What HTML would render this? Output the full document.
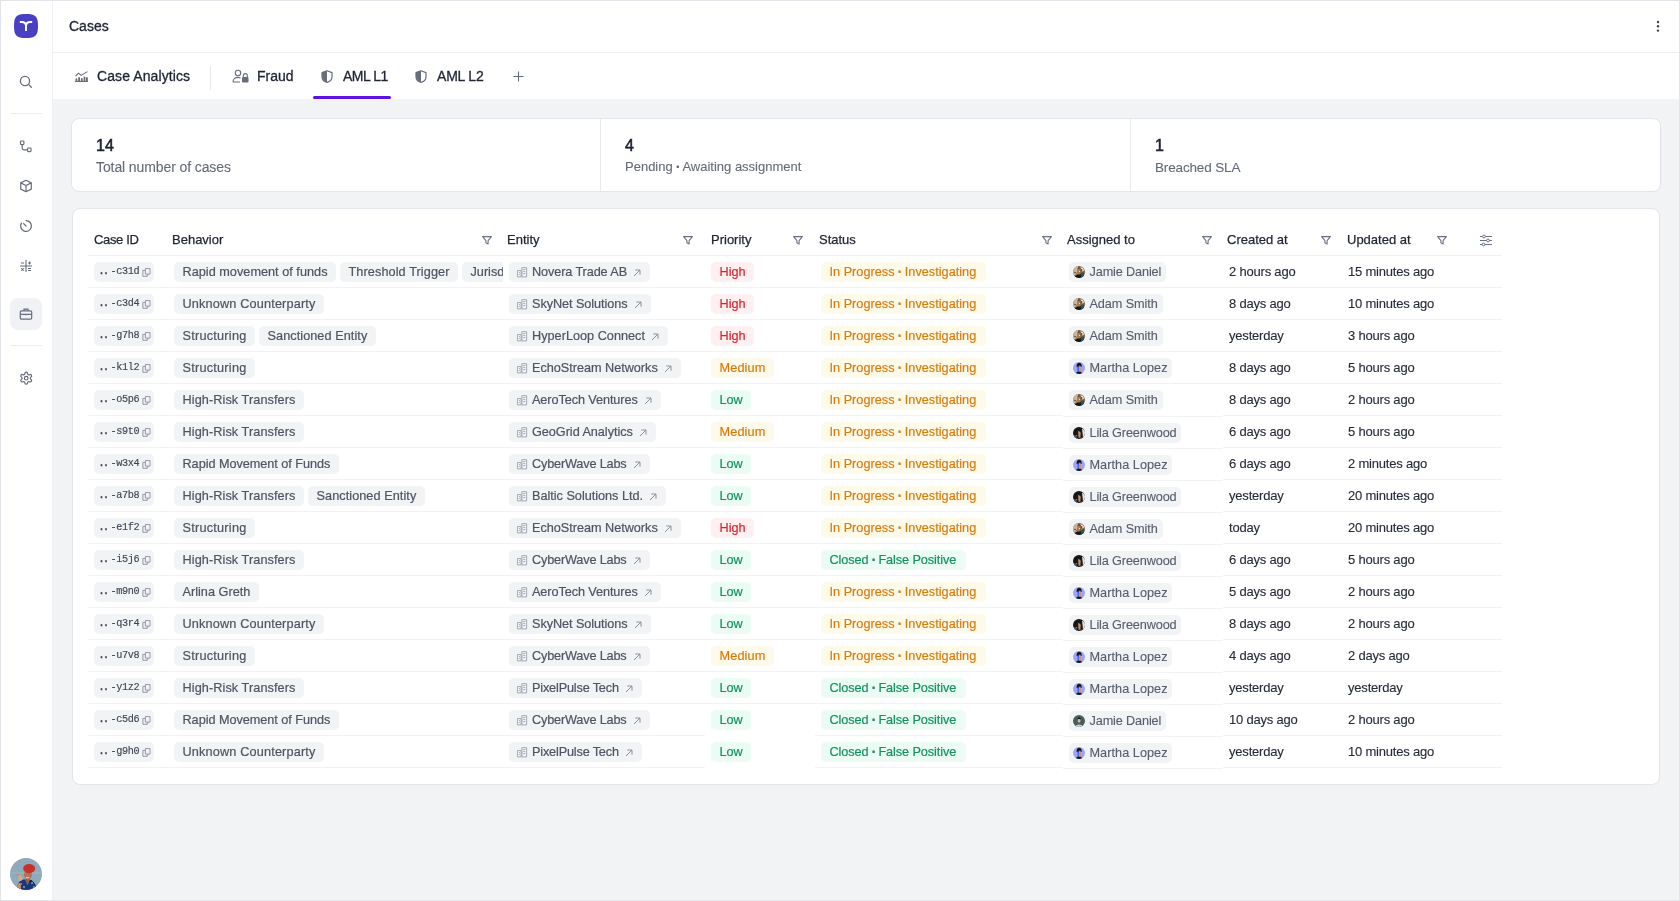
<!DOCTYPE html><html><head><meta charset="utf-8"><style>
*{box-sizing:border-box;margin:0;padding:0}
html,body{width:1680px;height:901px;overflow:hidden;background:#fff}
body{font-family:"Liberation Sans",sans-serif;color:#1f2433;position:relative}
.abs{position:absolute}
.row,.ttl,.th,.stats,.statn{will-change:transform}
#frame{position:absolute;left:0;top:0;width:1680px;height:901px;border:1px solid #e3e4e9;pointer-events:none;z-index:50}
#side{position:absolute;left:0;top:0;width:53px;height:901px;background:#fff;border-right:1px solid #eef0f3}
#main{position:absolute;left:53px;top:0;width:1627px;height:901px;background:#f2f3f5}
#hdr{position:absolute;left:53px;top:0;width:1627px;height:53px;background:#fff;border-bottom:1px solid #eef0f3}
#tabs{position:absolute;left:53px;top:53px;width:1627px;height:46px;background:#fff}
.ttl{position:absolute;font-size:14px;white-space:nowrap;color:#1f2433;-webkit-text-stroke:0.3px #1f2433}
.ic{position:absolute}
.card{position:absolute;background:#fff;border:1px solid #e4e5ea;border-radius:8px}
.statn{position:absolute;font-size:16px;font-weight:normal;color:#1c2130;-webkit-text-stroke:0.55px #1c2130}
.stats{position:absolute;font-size:14px;color:#646a7a;white-space:nowrap;-webkit-text-stroke:0.1px #646a7a}
.th{position:absolute;top:232px;font-size:13px;color:#1f2433;white-space:nowrap;-webkit-text-stroke:0.25px #1f2433}
.row{position:absolute;left:88px;width:1414px;height:32px;border-bottom:1px solid #f1f2f4}
.chip{position:absolute;top:6px;height:20px;border-radius:5px;background:#f2f3f5;font-size:12.7px;line-height:20px;white-space:nowrap;color:#4d5464;padding:0 8.5px;-webkit-text-stroke:0.2px currentColor}
.id{font-family:"Liberation Mono",monospace;font-size:10.5px;letter-spacing:-0.7px;-webkit-text-stroke:0.15px #3f4556;color:#3f4556;padding:0 0 0 5px;width:60px}
.dd{position:absolute;left:4.6px;top:0;letter-spacing:-1.7px;font-size:10px;-webkit-text-stroke:0.5px #3f4556}
.ih{position:absolute;left:16.6px;top:0;letter-spacing:-0.38px;font-size:10.2px}
.cp{position:absolute;left:48px;top:5.5px}
.bld{position:absolute;left:8px;top:5px}
.arr{position:absolute;top:7px}
.av{position:absolute;left:4px;top:4px}
.beh{position:absolute;left:86px;top:0;width:329px;height:32px;overflow:hidden;white-space:nowrap}
.bu{font-weight:normal;font-size:9px;vertical-align:1px}
.pri-h{background:#fef0f0;color:#d9272e}
.pri-m{background:#fefae9;color:#d97a0c}
.pri-l{background:#ebfcf4;color:#149163}
.st-ip{background:#fefae9;color:#da7d0e}
.st-cl{background:#ebfcf4;color:#149163}
.dt{position:absolute;top:0;line-height:32px;font-size:13px;color:#262b3a;white-space:nowrap;letter-spacing:-0.2px;-webkit-text-stroke:0.12px #262b3a}
</style></head><body>
<div id="side"></div><div id="main"></div><div id="hdr"></div><div id="tabs"></div>
<svg class="ic" style="left:14px;top:14px" width="24" height="24" viewBox="0 0 24 24"><path d="M12 0C21.6 0 24 2.4 24 12S21.6 24 12 24 0 21.6 0 12 2.4 0 12 0z" fill="#4a40c3"/><path d="M5.8 7.9H7.6C10.4 7.9 12 9.1 12 11.9M18.2 7.9H16.4C13.6 7.9 12 9.1 12 11.9M12 11V16.9" fill="none" stroke="#fff" stroke-width="2"/></svg>
<svg class="ic" style="left:19px;top:75px" width="14" height="14" viewBox="0 0 14 14"><circle cx="6" cy="6" r="4.6" fill="none" stroke="#676d7c" stroke-width="1.3"/><path d="M9.4 9.4l3.4 3.4" stroke="#676d7c" stroke-width="1.3"/></svg>
<div class="abs" style="left:10px;top:113px;width:32px;height:1px;background:#eceef1"></div>
<svg class="ic" style="left:19px;top:140px" width="14" height="13" viewBox="0 0 14 13"><rect x="1.5" y="1" width="3.4" height="3.6" rx="0.8" fill="none" stroke="#676d7c" stroke-width="1.2"/><rect x="8.6" y="8" width="3.4" height="3.6" rx="0.8" fill="none" stroke="#676d7c" stroke-width="1.2"/><path d="M3.2 4.6v3.4c0 1.2 0.6 1.8 1.8 1.8h3.6" fill="none" stroke="#676d7c" stroke-width="1.2"/></svg>
<svg class="ic" style="left:19px;top:179px" width="14" height="14" viewBox="0 0 14 14"><path d="M7 1.3l5.3 2.6v6.2L7 12.7 1.7 10.1V3.9z M1.7 3.9L7 6.5l5.3-2.6 M7 6.5v6.2" fill="none" stroke="#676d7c" stroke-width="1.2" stroke-linejoin="round"/></svg>
<svg class="ic" style="left:19px;top:219px" width="14" height="14" viewBox="0 0 14 14"><path d="M7 1.6A5.4 5.4 0 1 1 2.4 4.2" fill="none" stroke="#676d7c" stroke-width="1.3" stroke-linecap="round"/><path d="M7 7L4.6 4.6" stroke="#676d7c" stroke-width="1.3" stroke-linecap="round"/></svg>
<svg class="ic" style="left:19px;top:259px" width="14" height="14" viewBox="0 0 14 14"><path d="M7 1v12M1 7h12M2 4h3M9 4h3M10.5 2.5v3M2.3 9.3l2.4 2.4M4.7 9.3l-2.4 2.4M9 9.5h3M9 11.5h3" fill="none" stroke="#676d7c" stroke-width="1.1"/></svg>
<div class="abs" style="left:10px;top:298px;width:32px;height:32px;border-radius:8px;background:#f1f2f5"></div>
<svg class="ic" style="left:19px;top:307px" width="14" height="14" viewBox="0 0 14 14"><rect x="1.3" y="3.8" width="11.4" height="8.4" rx="1.2" fill="none" stroke="#676d7c" stroke-width="1.2"/><path d="M5 3.8V2.2h4v1.6M1.3 7.4h11.4M7 6.8v1.4" fill="none" stroke="#676d7c" stroke-width="1.2"/></svg>
<div class="abs" style="left:10px;top:345px;width:32px;height:1px;background:#eceef1"></div>
<svg class="ic" style="left:18.8px;top:371px" width="14.4" height="14.4" viewBox="0 0 24 24"><path d="M12.22 2h-.44a2 2 0 0 0-2 2v.18a2 2 0 0 1-1 1.73l-.43.25a2 2 0 0 1-2 0l-.15-.08a2 2 0 0 0-2.73.73l-.22.38a2 2 0 0 0 .73 2.730l.15.1a2 2 0 0 1 1 1.72v.51a2 2 0 0 1-1 1.74l-.15.09a2 2 0 0 0-.73 2.73l.22.38a2 2 0 0 0 2.73.73l.15-.08a2 2 0 0 1 2 0l.43.25a2 2 0 0 1 1 1.73V20a2 2 0 0 0 2 2h.44a2 2 0 0 0 2-2v-.18a2 2 0 0 1 1-1.73l.43-.25a2 2 0 0 1 2 0l.15.08a2 2 0 0 0 2.73-.73l.22-.39a2 2 0 0 0-.73-2.73l-.15-.08a2 2 0 0 1-1-1.740v-.5a2 2 0 0 1 1-1.74l.15-.09a2 2 0 0 0 .73-2.73l-.22-.38a2 2 0 0 0-2.73-.73l-.15.08a2 2 0 0 1-2 0l-.43-.25a2 2 0 0 1-1-1.73V4a2 2 0 0 0-2-2z" fill="none" stroke="#676d7c" stroke-width="2" stroke-linejoin="round"/><circle cx="12" cy="12" r="3" fill="none" stroke="#676d7c" stroke-width="2"/></svg>
<svg class="ic" style="left:10px;top:858px" width="32" height="32" viewBox="0 0 32 32"><defs><clipPath id="ac"><circle cx="16" cy="16" r="16"/></clipPath></defs><g clip-path="url(#ac)"><rect width="32" height="32" fill="#8eaabb"/><rect y="14.5" width="32" height="1" fill="#9fb7c6"/><path d="M6 33c0.5-6 3-10.5 7.5-11.5h6c4.5 1 7 5.5 7.5 11.5z" fill="#17397a"/><path d="M15 21.5l2.5 6 2.5-6z" fill="#9a5e44"/><circle cx="11" cy="26" r="0.8" fill="#dfe7f2"/><circle cx="14" cy="29" r="0.8" fill="#dfe7f2"/><circle cx="22" cy="25" r="0.8" fill="#dfe7f2"/><circle cx="24" cy="29" r="0.8" fill="#dfe7f2"/><ellipse cx="18" cy="16.8" rx="4" ry="4.6" fill="#b27458"/><path d="M16 19.2c1 0.8 2.4 0.8 3.2 0" stroke="#f3e6e0" stroke-width="1" fill="none"/><ellipse cx="19.2" cy="10.6" rx="6" ry="4.6" fill="#c9302a"/><path d="M6.5 16.8l7 0.8" stroke="#d9835a" stroke-width="0.9"/><ellipse cx="10.3" cy="20" rx="2" ry="3" fill="#d7a88e"/><circle cx="21" cy="23.3" r="1.1" fill="#1a1a2a"/><ellipse cx="9" cy="29" rx="2" ry="4" fill="#c58a70"/></g></svg>
<div class="ttl" style="left:69px;top:18px;font-size:14px;">Cases</div>
<svg class="ic" style="left:1656px;top:20px" width="4" height="13" viewBox="0 0 4 13"><circle cx="2" cy="2" r="1.2" fill="#3c4150"/><circle cx="2" cy="6.3" r="1.2" fill="#3c4150"/><circle cx="2" cy="10.6" r="1.2" fill="#3c4150"/></svg>
<svg class="ic" style="left:75px;top:71px" width="13" height="11" viewBox="0 0 13 11"><path d="M0.6 5.2l3-3 2.6 2.2L12.4 0.6" fill="none" stroke="#666c7b" stroke-width="1.1" stroke-linejoin="round"/><path d="M0.5 11V8.2a0.9 0.9 0 0 1 1.8 0V11z M3.2 11V7a0.9 0.9 0 0 1 1.8 0V11z M5.9 11V8a0.9 0.9 0 0 1 1.8 0V11z M8.6 11V6.4a0.9 0.9 0 0 1 1.8 0V11z M11 11V6.8a0.9 0.9 0 0 1 1.8 0V11z" fill="#666c7b"/><path d="M0.3 10.4h12.4" stroke="#666c7b" stroke-width="1.1"/></svg>
<div class="ttl" style="left:97px;top:68px;letter-spacing:0.1px">Case Analytics</div>
<div class="abs" style="left:210px;top:66px;width:1px;height:24px;background:#e6e8ec"></div>
<svg class="ic" style="left:232px;top:69px" width="18" height="14" viewBox="0 0 18 14"><circle cx="6" cy="4" r="2.7" fill="none" stroke="#666c7b" stroke-width="1.1"/><path d="M1 13c0-3 2-4.6 5-4.6 1 0 1.8 0.2 2.5 0.5M1 13h7" fill="none" stroke="#666c7b" stroke-width="1.1"/><rect x="10" y="8" width="6.5" height="5.5" rx="1" fill="#666c7b"/><path d="M11.3 8V6.6a2 2 0 0 1 4 0V8" fill="none" stroke="#666c7b" stroke-width="1.1"/></svg>
<div class="ttl" style="left:257px;top:68px">Fraud</div>
<svg class="ic" style="left:321px;top:70px" width="12" height="13" viewBox="0 0 12 13"><path d="M6 0.8L11 2.6v3.8c0 3-2.2 5.2-5 6-2.8-0.8-5-3-5-6V2.6z" fill="none" stroke="#666c7b" stroke-width="1.2" stroke-linejoin="round"/><path d="M6 0.8v11.4c-2.8-0.8-5-3-5-6V2.6z" fill="#666c7b"/></svg>
<div class="ttl" style="left:343px;top:68px;letter-spacing:-0.5px">AML L1</div>
<div class="abs" style="left:313px;top:96px;width:78px;height:3px;border-radius:2px;background:#5b12e3"></div>
<svg class="ic" style="left:415px;top:70px" width="12" height="13" viewBox="0 0 12 13"><path d="M6 0.8L11 2.6v3.8c0 3-2.2 5.2-5 6-2.8-0.8-5-3-5-6V2.6z" fill="none" stroke="#666c7b" stroke-width="1.2" stroke-linejoin="round"/><path d="M6 0.8v11.4c-2.8-0.8-5-3-5-6V2.6z" fill="#666c7b"/></svg>
<div class="ttl" style="left:437px;top:68px;letter-spacing:-0.2px">AML L2</div>
<svg class="ic" style="left:513px;top:71px" width="11" height="11" viewBox="0 0 11 11"><path d="M5.5 0.5v10M0.5 5.5h10" stroke="#666c7b" stroke-width="1.1"/></svg>
<div class="card" style="left:71px;top:118px;width:1590px;height:74px"></div>
<div class="abs" style="left:600px;top:119px;width:1px;height:72px;background:#e9eaee"></div>
<div class="abs" style="left:1130px;top:119px;width:1px;height:72px;background:#e9eaee"></div>
<div class="statn" style="left:96px;top:137px">14</div>
<div class="stats" style="left:96px;top:159px;font-size:14px;letter-spacing:-0.1px">Total number of cases</div>
<div class="statn" style="left:625px;top:137px">4</div>
<div class="stats" style="left:625px;top:159px;font-size:13px;letter-spacing:0px">Pending <b class=bu>•</b> Awaiting assignment</div>
<div class="statn" style="left:1155px;top:137px">1</div>
<div class="stats" style="left:1155px;top:159.5px;font-size:13.5px;letter-spacing:-0.15px">Breached SLA</div>
<div class="card" style="left:72px;top:208px;width:1588px;height:577px"></div>
<div class="th" style="left:94px;letter-spacing:-0.35px">Case ID</div>
<div class="th" style="left:172px;">Behavior</div>
<svg class="ic" style="left:480.5px;top:234px" width="12" height="12" viewBox="0 0 12 12"><path d="M1.6 2.6h8.8L7.1 6.6v3.3L4.9 8.7V6.6z" fill="none" stroke="#6b7180" stroke-width="1.1" stroke-linejoin="round"/></svg>
<div class="th" style="left:507px;">Entity</div>
<svg class="ic" style="left:681.5px;top:234px" width="12" height="12" viewBox="0 0 12 12"><path d="M1.6 2.6h8.8L7.1 6.6v3.3L4.9 8.7V6.6z" fill="none" stroke="#6b7180" stroke-width="1.1" stroke-linejoin="round"/></svg>
<div class="th" style="left:711px;">Priority</div>
<svg class="ic" style="left:791.5px;top:234px" width="12" height="12" viewBox="0 0 12 12"><path d="M1.6 2.6h8.8L7.1 6.6v3.3L4.9 8.7V6.6z" fill="none" stroke="#6b7180" stroke-width="1.1" stroke-linejoin="round"/></svg>
<div class="th" style="left:819px;">Status</div>
<svg class="ic" style="left:1040.5px;top:234px" width="12" height="12" viewBox="0 0 12 12"><path d="M1.6 2.6h8.8L7.1 6.6v3.3L4.9 8.7V6.6z" fill="none" stroke="#6b7180" stroke-width="1.1" stroke-linejoin="round"/></svg>
<div class="th" style="left:1067px;">Assigned to</div>
<svg class="ic" style="left:1200.5px;top:234px" width="12" height="12" viewBox="0 0 12 12"><path d="M1.6 2.6h8.8L7.1 6.6v3.3L4.9 8.7V6.6z" fill="none" stroke="#6b7180" stroke-width="1.1" stroke-linejoin="round"/></svg>
<div class="th" style="left:1227px;">Created at</div>
<svg class="ic" style="left:1319.5px;top:234px" width="12" height="12" viewBox="0 0 12 12"><path d="M1.6 2.6h8.8L7.1 6.6v3.3L4.9 8.7V6.6z" fill="none" stroke="#6b7180" stroke-width="1.1" stroke-linejoin="round"/></svg>
<div class="th" style="left:1347px;">Updated at</div>
<svg class="ic" style="left:1435.5px;top:234px" width="12" height="12" viewBox="0 0 12 12"><path d="M1.6 2.6h8.8L7.1 6.6v3.3L4.9 8.7V6.6z" fill="none" stroke="#6b7180" stroke-width="1.1" stroke-linejoin="round"/></svg>
<svg class="ic" style="left:1479px;top:234px" width="14" height="13" viewBox="0 0 14 13"><path d="M1 2.5h12M1 6.5h12M1 10.5h12" stroke="#6b7180" stroke-width="1.1"/><circle cx="5" cy="2.5" r="1.4" fill="#fff" stroke="#6b7180" stroke-width="1"/><circle cx="9" cy="6.5" r="1.4" fill="#fff" stroke="#6b7180" stroke-width="1"/><circle cx="4.5" cy="10.5" r="1.4" fill="#fff" stroke="#6b7180" stroke-width="1"/></svg>
<div class="abs" style="left:88px;top:255px;width:1414px;height:1px;background:#eff0f3"></div>
<div class="row" style="top:256px">
<div class="chip id" style="left:6px"><span class="dd">..</span><span class="ih">-c31d</span><svg class="cp" width="9" height="9" viewBox="0 0 9 9"><path d="M3.4 0.5h4.6v5.6H3.4z" fill="none" stroke="#9298a6" stroke-width="1"/><path d="M3.4 2.4H0.9v5.9h4.5V6.1" fill="none" stroke="#9298a6" stroke-width="1"/></svg></div>
<div class="beh"><div class="chip" style="position:relative;display:inline-block;margin-right:4px;vertical-align:top;width:162px;letter-spacing:0.018px;">Rapid movement of funds</div><div class="chip" style="position:relative;display:inline-block;margin-right:4px;vertical-align:top;width:118px;letter-spacing:0.092px;">Threshold Trigger</div><div class="chip" style="position:relative;display:inline-block;margin-right:4px;vertical-align:top;">Jurisdiction Risk</div></div>
<div class="chip" style="left:421px;padding-left:23px;padding-right:22px;width:141px;letter-spacing:-0.108px;"><svg class="bld" width="11" height="11" viewBox="0 0 11 11"><path d="M0.6 3.5h3.5v6.4H0.6z M4.9 0.7h4.7v9.2H4.9z M6.3 2.6h1.9 M6.3 4.6h1.9 M6.3 6.6h1.9" fill="none" stroke="#9ea3b0" stroke-width="0.95"/><circle cx="2.35" cy="5.6" r="0.55" fill="#9ea3b0"/><circle cx="2.35" cy="7.3" r="0.55" fill="#9ea3b0"/></svg>Novera Trade AB<svg class="arr" style="right:9px" width="8" height="8" viewBox="0 0 8 8"><path d="M1 7L7 1M2.3 1H7v4.7" fill="none" stroke="#8a909d" stroke-width="1"/></svg></div>
<div class="chip pri-h" style="left:623px;width:43px;letter-spacing:-0.023px;">High</div>
<div class="chip st-ip" style="left:733px;width:165px;letter-spacing:0.014px;">In Progress <b class=bu>•</b> Investigating</div>
<div class="chip" style="left:981px;top:6px;padding-left:20.5px;padding-right:5px;width:97px;letter-spacing:-0.137px;color:#575d6d;-webkit-text-stroke:0.12px #575d6d"><svg class="av" width="12" height="12" viewBox="0 0 12 12"><defs><clipPath id="c_jd"><circle cx="6" cy="6" r="6"/></clipPath></defs><g clip-path="url(#c_jd)"><rect width="12" height="12" fill="#7b6552"/><path d="M0 0h5v4.5L2.5 9 0 9z" fill="#c9b79a"/><path d="M7.5 1.2c2 0 3.6 1.5 3.6 3.5L9 5.5z" fill="#e8ddc8"/><circle cx="8.6" cy="4" r="0.8" fill="#12322e"/><path d="M4 3c1.6-0.8 3.2 0 3.3 1.8l-0.3 3.4H4.5z" fill="#b27952"/><path d="M4.5 2.5c0.6-0.6 1.6-0.8 2.4-0.3" stroke="#5a2430" stroke-width="0.8" fill="none"/><circle cx="6.6" cy="5.6" r="0.5" fill="#fff"/><path d="M1.5 12c0.5-2.5 2.2-3.5 4.5-3.5L9 8c1.5 0.4 2.3 1.8 2.5 4z" fill="#141a1a"/><path d="M7.5 7.5l3-1.5 1 2v4h-3z" fill="#2c5550"/><circle cx="2" cy="6.5" r="0.7" fill="#12322e"/><circle cx="3.2" cy="8.4" r="0.5" fill="#c89630"/></g></svg>Jamie Daniel</div>
<div class="dt" style="left:1141px">2 hours ago</div>
<div class="dt" style="left:1260px">15 minutes ago</div>
</div>
<div class="row" style="top:288px">
<div class="chip id" style="left:6px"><span class="dd">..</span><span class="ih">-c3d4</span><svg class="cp" width="9" height="9" viewBox="0 0 9 9"><path d="M3.4 0.5h4.6v5.6H3.4z" fill="none" stroke="#9298a6" stroke-width="1"/><path d="M3.4 2.4H0.9v5.9h4.5V6.1" fill="none" stroke="#9298a6" stroke-width="1"/></svg></div>
<div class="beh"><div class="chip" style="position:relative;display:inline-block;margin-right:4px;vertical-align:top;width:150px;letter-spacing:0.162px;">Unknown Counterparty</div></div>
<div class="chip" style="left:421px;padding-left:23px;padding-right:22px;width:141.5px;letter-spacing:-0.070px;"><svg class="bld" width="11" height="11" viewBox="0 0 11 11"><path d="M0.6 3.5h3.5v6.4H0.6z M4.9 0.7h4.7v9.2H4.9z M6.3 2.6h1.9 M6.3 4.6h1.9 M6.3 6.6h1.9" fill="none" stroke="#9ea3b0" stroke-width="0.95"/><circle cx="2.35" cy="5.6" r="0.55" fill="#9ea3b0"/><circle cx="2.35" cy="7.3" r="0.55" fill="#9ea3b0"/></svg>SkyNet Solutions<svg class="arr" style="right:9px" width="8" height="8" viewBox="0 0 8 8"><path d="M1 7L7 1M2.3 1H7v4.7" fill="none" stroke="#8a909d" stroke-width="1"/></svg></div>
<div class="chip pri-h" style="left:623px;width:43px;letter-spacing:-0.023px;">High</div>
<div class="chip st-ip" style="left:733px;width:165px;letter-spacing:0.014px;">In Progress <b class=bu>•</b> Investigating</div>
<div class="chip" style="left:981px;top:6px;padding-left:20.5px;padding-right:5px;width:93.5px;letter-spacing:-0.091px;color:#575d6d;-webkit-text-stroke:0.12px #575d6d"><svg class="av" width="12" height="12" viewBox="0 0 12 12"><defs><clipPath id="c_as"><circle cx="6" cy="6" r="6"/></clipPath></defs><g clip-path="url(#c_as)"><rect width="12" height="12" fill="#7b6552"/><path d="M0 0h5v4.5L2.5 9 0 9z" fill="#c9b79a"/><path d="M7.5 1.2c2 0 3.6 1.5 3.6 3.5L9 5.5z" fill="#e8ddc8"/><circle cx="8.6" cy="4" r="0.8" fill="#12322e"/><path d="M4 3c1.6-0.8 3.2 0 3.3 1.8l-0.3 3.4H4.5z" fill="#b27952"/><path d="M4.5 2.5c0.6-0.6 1.6-0.8 2.4-0.3" stroke="#5a2430" stroke-width="0.8" fill="none"/><circle cx="6.6" cy="5.6" r="0.5" fill="#fff"/><path d="M1.5 12c0.5-2.5 2.2-3.5 4.5-3.5L9 8c1.5 0.4 2.3 1.8 2.5 4z" fill="#141a1a"/><path d="M7.5 7.5l3-1.5 1 2v4h-3z" fill="#2c5550"/><circle cx="2" cy="6.5" r="0.7" fill="#12322e"/><circle cx="3.2" cy="8.4" r="0.5" fill="#c89630"/></g></svg>Adam Smith</div>
<div class="dt" style="left:1141px">8 days ago</div>
<div class="dt" style="left:1260px">10 minutes ago</div>
</div>
<div class="row" style="top:320px">
<div class="chip id" style="left:6px"><span class="dd">..</span><span class="ih">-g7h8</span><svg class="cp" width="9" height="9" viewBox="0 0 9 9"><path d="M3.4 0.5h4.6v5.6H3.4z" fill="none" stroke="#9298a6" stroke-width="1"/><path d="M3.4 2.4H0.9v5.9h4.5V6.1" fill="none" stroke="#9298a6" stroke-width="1"/></svg></div>
<div class="beh"><div class="chip" style="position:relative;display:inline-block;margin-right:4px;vertical-align:top;width:81px;letter-spacing:0.240px;">Structuring</div><div class="chip" style="position:relative;display:inline-block;margin-right:4px;vertical-align:top;width:116.8px;letter-spacing:0.062px;">Sanctioned Entity</div></div>
<div class="chip" style="left:421px;padding-left:23px;padding-right:22px;width:159px;letter-spacing:0.008px;"><svg class="bld" width="11" height="11" viewBox="0 0 11 11"><path d="M0.6 3.5h3.5v6.4H0.6z M4.9 0.7h4.7v9.2H4.9z M6.3 2.6h1.9 M6.3 4.6h1.9 M6.3 6.6h1.9" fill="none" stroke="#9ea3b0" stroke-width="0.95"/><circle cx="2.35" cy="5.6" r="0.55" fill="#9ea3b0"/><circle cx="2.35" cy="7.3" r="0.55" fill="#9ea3b0"/></svg>HyperLoop Connect<svg class="arr" style="right:9px" width="8" height="8" viewBox="0 0 8 8"><path d="M1 7L7 1M2.3 1H7v4.7" fill="none" stroke="#8a909d" stroke-width="1"/></svg></div>
<div class="chip pri-h" style="left:623px;width:43px;letter-spacing:-0.023px;">High</div>
<div class="chip st-ip" style="left:733px;width:165px;letter-spacing:0.014px;">In Progress <b class=bu>•</b> Investigating</div>
<div class="chip" style="left:981px;top:6px;padding-left:20.5px;padding-right:5px;width:93.5px;letter-spacing:-0.091px;color:#575d6d;-webkit-text-stroke:0.12px #575d6d"><svg class="av" width="12" height="12" viewBox="0 0 12 12"><defs><clipPath id="c_as"><circle cx="6" cy="6" r="6"/></clipPath></defs><g clip-path="url(#c_as)"><rect width="12" height="12" fill="#7b6552"/><path d="M0 0h5v4.5L2.5 9 0 9z" fill="#c9b79a"/><path d="M7.5 1.2c2 0 3.6 1.5 3.6 3.5L9 5.5z" fill="#e8ddc8"/><circle cx="8.6" cy="4" r="0.8" fill="#12322e"/><path d="M4 3c1.6-0.8 3.2 0 3.3 1.8l-0.3 3.4H4.5z" fill="#b27952"/><path d="M4.5 2.5c0.6-0.6 1.6-0.8 2.4-0.3" stroke="#5a2430" stroke-width="0.8" fill="none"/><circle cx="6.6" cy="5.6" r="0.5" fill="#fff"/><path d="M1.5 12c0.5-2.5 2.2-3.5 4.5-3.5L9 8c1.5 0.4 2.3 1.8 2.5 4z" fill="#141a1a"/><path d="M7.5 7.5l3-1.5 1 2v4h-3z" fill="#2c5550"/><circle cx="2" cy="6.5" r="0.7" fill="#12322e"/><circle cx="3.2" cy="8.4" r="0.5" fill="#c89630"/></g></svg>Adam Smith</div>
<div class="dt" style="left:1141px">yesterday</div>
<div class="dt" style="left:1260px">3 hours ago</div>
</div>
<div class="row" style="top:352px">
<div class="chip id" style="left:6px"><span class="dd">..</span><span class="ih">-k1l2</span><svg class="cp" width="9" height="9" viewBox="0 0 9 9"><path d="M3.4 0.5h4.6v5.6H3.4z" fill="none" stroke="#9298a6" stroke-width="1"/><path d="M3.4 2.4H0.9v5.9h4.5V6.1" fill="none" stroke="#9298a6" stroke-width="1"/></svg></div>
<div class="beh"><div class="chip" style="position:relative;display:inline-block;margin-right:4px;vertical-align:top;width:81px;letter-spacing:0.240px;">Structuring</div></div>
<div class="chip" style="left:421px;padding-left:23px;padding-right:22px;width:171.7px;letter-spacing:-0.027px;"><svg class="bld" width="11" height="11" viewBox="0 0 11 11"><path d="M0.6 3.5h3.5v6.4H0.6z M4.9 0.7h4.7v9.2H4.9z M6.3 2.6h1.9 M6.3 4.6h1.9 M6.3 6.6h1.9" fill="none" stroke="#9ea3b0" stroke-width="0.95"/><circle cx="2.35" cy="5.6" r="0.55" fill="#9ea3b0"/><circle cx="2.35" cy="7.3" r="0.55" fill="#9ea3b0"/></svg>EchoStream Networks<svg class="arr" style="right:9px" width="8" height="8" viewBox="0 0 8 8"><path d="M1 7L7 1M2.3 1H7v4.7" fill="none" stroke="#8a909d" stroke-width="1"/></svg></div>
<div class="chip pri-m" style="left:623px;width:63px;letter-spacing:0.146px;">Medium</div>
<div class="chip st-ip" style="left:733px;width:165px;letter-spacing:0.014px;">In Progress <b class=bu>•</b> Investigating</div>
<div class="chip" style="left:981px;top:6px;padding-left:20.5px;padding-right:5px;width:103.4px;letter-spacing:0.042px;color:#575d6d;-webkit-text-stroke:0.12px #575d6d"><svg class="av" width="12" height="12" viewBox="0 0 12 12"><defs><clipPath id="c_ml"><circle cx="6" cy="6" r="6"/></clipPath></defs><g clip-path="url(#c_ml)"><rect width="12" height="12" fill="#9ea6f2"/><path d="M3.6 4.2c0-2.6 1.4-3.4 2.6-3.4 1.4 0 2.4 0.9 2.4 2.8v1.5H3.6z" fill="#15142a"/><path d="M4.2 4.5h1.9v6.5H4.6z" fill="#3d6fe6"/><path d="M6.1 3.5c1.2 0 1.9 0.8 1.9 2.2v5.3H6.1z" fill="#c9947c"/><path d="M2.5 12c0.5-1.6 1.6-2.2 3.5-2.2s3 0.6 3.5 2.2z" fill="#0c1030"/></g></svg>Martha Lopez</div>
<div class="dt" style="left:1141px">8 days ago</div>
<div class="dt" style="left:1260px">5 hours ago</div>
</div>
<div class="row" style="top:384px">
<div class="chip id" style="left:6px"><span class="dd">..</span><span class="ih">-o5p6</span><svg class="cp" width="9" height="9" viewBox="0 0 9 9"><path d="M3.4 0.5h4.6v5.6H3.4z" fill="none" stroke="#9298a6" stroke-width="1"/><path d="M3.4 2.4H0.9v5.9h4.5V6.1" fill="none" stroke="#9298a6" stroke-width="1"/></svg></div>
<div class="beh"><div class="chip" style="position:relative;display:inline-block;margin-right:4px;vertical-align:top;width:130px;letter-spacing:0.084px;">High-Risk Transfers</div></div>
<div class="chip" style="left:421px;padding-left:23px;padding-right:22px;width:151.7px;letter-spacing:-0.089px;"><svg class="bld" width="11" height="11" viewBox="0 0 11 11"><path d="M0.6 3.5h3.5v6.4H0.6z M4.9 0.7h4.7v9.2H4.9z M6.3 2.6h1.9 M6.3 4.6h1.9 M6.3 6.6h1.9" fill="none" stroke="#9ea3b0" stroke-width="0.95"/><circle cx="2.35" cy="5.6" r="0.55" fill="#9ea3b0"/><circle cx="2.35" cy="7.3" r="0.55" fill="#9ea3b0"/></svg>AeroTech Ventures<svg class="arr" style="right:9px" width="8" height="8" viewBox="0 0 8 8"><path d="M1 7L7 1M2.3 1H7v4.7" fill="none" stroke="#8a909d" stroke-width="1"/></svg></div>
<div class="chip pri-l" style="left:623px;width:40px;letter-spacing:-0.094px;">Low</div>
<div class="chip st-ip" style="left:733px;width:165px;letter-spacing:0.014px;">In Progress <b class=bu>•</b> Investigating</div>
<div class="chip" style="left:981px;top:6px;padding-left:20.5px;padding-right:5px;width:93.5px;letter-spacing:-0.091px;color:#575d6d;-webkit-text-stroke:0.12px #575d6d"><svg class="av" width="12" height="12" viewBox="0 0 12 12"><defs><clipPath id="c_as"><circle cx="6" cy="6" r="6"/></clipPath></defs><g clip-path="url(#c_as)"><rect width="12" height="12" fill="#7b6552"/><path d="M0 0h5v4.5L2.5 9 0 9z" fill="#c9b79a"/><path d="M7.5 1.2c2 0 3.6 1.5 3.6 3.5L9 5.5z" fill="#e8ddc8"/><circle cx="8.6" cy="4" r="0.8" fill="#12322e"/><path d="M4 3c1.6-0.8 3.2 0 3.3 1.8l-0.3 3.4H4.5z" fill="#b27952"/><path d="M4.5 2.5c0.6-0.6 1.6-0.8 2.4-0.3" stroke="#5a2430" stroke-width="0.8" fill="none"/><circle cx="6.6" cy="5.6" r="0.5" fill="#fff"/><path d="M1.5 12c0.5-2.5 2.2-3.5 4.5-3.5L9 8c1.5 0.4 2.3 1.8 2.5 4z" fill="#141a1a"/><path d="M7.5 7.5l3-1.5 1 2v4h-3z" fill="#2c5550"/><circle cx="2" cy="6.5" r="0.7" fill="#12322e"/><circle cx="3.2" cy="8.4" r="0.5" fill="#c89630"/></g></svg>Adam Smith</div>
<div class="dt" style="left:1141px">8 days ago</div>
<div class="dt" style="left:1260px">2 hours ago</div>
</div>
<div class="row" style="top:416px">
<div class="chip id" style="left:6px"><span class="dd">..</span><span class="ih">-s9t0</span><svg class="cp" width="9" height="9" viewBox="0 0 9 9"><path d="M3.4 0.5h4.6v5.6H3.4z" fill="none" stroke="#9298a6" stroke-width="1"/><path d="M3.4 2.4H0.9v5.9h4.5V6.1" fill="none" stroke="#9298a6" stroke-width="1"/></svg></div>
<div class="beh"><div class="chip" style="position:relative;display:inline-block;margin-right:4px;vertical-align:top;width:130px;letter-spacing:0.084px;">High-Risk Transfers</div></div>
<div class="chip" style="left:421px;padding-left:23px;padding-right:22px;width:146.8px;letter-spacing:-0.044px;"><svg class="bld" width="11" height="11" viewBox="0 0 11 11"><path d="M0.6 3.5h3.5v6.4H0.6z M4.9 0.7h4.7v9.2H4.9z M6.3 2.6h1.9 M6.3 4.6h1.9 M6.3 6.6h1.9" fill="none" stroke="#9ea3b0" stroke-width="0.95"/><circle cx="2.35" cy="5.6" r="0.55" fill="#9ea3b0"/><circle cx="2.35" cy="7.3" r="0.55" fill="#9ea3b0"/></svg>GeoGrid Analytics<svg class="arr" style="right:9px" width="8" height="8" viewBox="0 0 8 8"><path d="M1 7L7 1M2.3 1H7v4.7" fill="none" stroke="#8a909d" stroke-width="1"/></svg></div>
<div class="chip pri-m" style="left:623px;width:63px;letter-spacing:0.146px;">Medium</div>
<div class="chip st-ip" style="left:733px;width:165px;letter-spacing:0.014px;">In Progress <b class=bu>•</b> Investigating</div>
<div class="chip" style="left:981px;top:7px;padding-left:20.5px;padding-right:5px;width:112.3px;letter-spacing:-0.134px;color:#575d6d;-webkit-text-stroke:0.12px #575d6d"><svg class="av" width="12" height="12" viewBox="0 0 12 12"><defs><clipPath id="c_lg"><circle cx="6" cy="6" r="6"/></clipPath></defs><g clip-path="url(#c_lg)"><rect width="12" height="12" fill="#1c1411"/><path d="M9 1.5l3 2v6l-2 1z" fill="#dbe6ec"/><path d="M5 4.5c1.3-0.6 2.6 0 2.7 1.8l-0.3 4.5H5.6z" fill="#c28e70"/><path d="M1 8.5c1-0.6 2-0.4 2.5 0.3l0.5 3H1z" fill="#2f6a8f"/><circle cx="3.8" cy="8.4" r="0.6" fill="#d8692a"/><path d="M8.5 10c0.8 0 1.4 0.6 1.6 1.6l-1.6 0.4z" fill="#2a6488"/></g></svg>Lila Greenwood</div>
<div class="dt" style="left:1141px">6 days ago</div>
<div class="dt" style="left:1260px">5 hours ago</div>
</div>
<div class="row" style="top:448px">
<div class="chip id" style="left:6px"><span class="dd">..</span><span class="ih">-w3x4</span><svg class="cp" width="9" height="9" viewBox="0 0 9 9"><path d="M3.4 0.5h4.6v5.6H3.4z" fill="none" stroke="#9298a6" stroke-width="1"/><path d="M3.4 2.4H0.9v5.9h4.5V6.1" fill="none" stroke="#9298a6" stroke-width="1"/></svg></div>
<div class="beh"><div class="chip" style="position:relative;display:inline-block;margin-right:4px;vertical-align:top;width:164.8px;letter-spacing:-0.044px;">Rapid Movement of Funds</div></div>
<div class="chip" style="left:421px;padding-left:23px;padding-right:22px;width:140.5px;letter-spacing:-0.167px;"><svg class="bld" width="11" height="11" viewBox="0 0 11 11"><path d="M0.6 3.5h3.5v6.4H0.6z M4.9 0.7h4.7v9.2H4.9z M6.3 2.6h1.9 M6.3 4.6h1.9 M6.3 6.6h1.9" fill="none" stroke="#9ea3b0" stroke-width="0.95"/><circle cx="2.35" cy="5.6" r="0.55" fill="#9ea3b0"/><circle cx="2.35" cy="7.3" r="0.55" fill="#9ea3b0"/></svg>CyberWave Labs<svg class="arr" style="right:9px" width="8" height="8" viewBox="0 0 8 8"><path d="M1 7L7 1M2.3 1H7v4.7" fill="none" stroke="#8a909d" stroke-width="1"/></svg></div>
<div class="chip pri-l" style="left:623px;width:40px;letter-spacing:-0.094px;">Low</div>
<div class="chip st-ip" style="left:733px;width:165px;letter-spacing:0.014px;">In Progress <b class=bu>•</b> Investigating</div>
<div class="chip" style="left:981px;top:7px;padding-left:20.5px;padding-right:5px;width:103.4px;letter-spacing:0.042px;color:#575d6d;-webkit-text-stroke:0.12px #575d6d"><svg class="av" width="12" height="12" viewBox="0 0 12 12"><defs><clipPath id="c_ml"><circle cx="6" cy="6" r="6"/></clipPath></defs><g clip-path="url(#c_ml)"><rect width="12" height="12" fill="#9ea6f2"/><path d="M3.6 4.2c0-2.6 1.4-3.4 2.6-3.4 1.4 0 2.4 0.9 2.4 2.8v1.5H3.6z" fill="#15142a"/><path d="M4.2 4.5h1.9v6.5H4.6z" fill="#3d6fe6"/><path d="M6.1 3.5c1.2 0 1.9 0.8 1.9 2.2v5.3H6.1z" fill="#c9947c"/><path d="M2.5 12c0.5-1.6 1.6-2.2 3.5-2.2s3 0.6 3.5 2.2z" fill="#0c1030"/></g></svg>Martha Lopez</div>
<div class="dt" style="left:1141px">6 days ago</div>
<div class="dt" style="left:1260px">2 minutes ago</div>
</div>
<div class="row" style="top:480px">
<div class="chip id" style="left:6px"><span class="dd">..</span><span class="ih">-a7b8</span><svg class="cp" width="9" height="9" viewBox="0 0 9 9"><path d="M3.4 0.5h4.6v5.6H3.4z" fill="none" stroke="#9298a6" stroke-width="1"/><path d="M3.4 2.4H0.9v5.9h4.5V6.1" fill="none" stroke="#9298a6" stroke-width="1"/></svg></div>
<div class="beh"><div class="chip" style="position:relative;display:inline-block;margin-right:4px;vertical-align:top;width:130px;letter-spacing:0.084px;">High-Risk Transfers</div><div class="chip" style="position:relative;display:inline-block;margin-right:4px;vertical-align:top;width:116.8px;letter-spacing:0.062px;">Sanctioned Entity</div></div>
<div class="chip" style="left:421px;padding-left:23px;padding-right:22px;width:157px;letter-spacing:-0.021px;"><svg class="bld" width="11" height="11" viewBox="0 0 11 11"><path d="M0.6 3.5h3.5v6.4H0.6z M4.9 0.7h4.7v9.2H4.9z M6.3 2.6h1.9 M6.3 4.6h1.9 M6.3 6.6h1.9" fill="none" stroke="#9ea3b0" stroke-width="0.95"/><circle cx="2.35" cy="5.6" r="0.55" fill="#9ea3b0"/><circle cx="2.35" cy="7.3" r="0.55" fill="#9ea3b0"/></svg>Baltic Solutions Ltd.<svg class="arr" style="right:9px" width="8" height="8" viewBox="0 0 8 8"><path d="M1 7L7 1M2.3 1H7v4.7" fill="none" stroke="#8a909d" stroke-width="1"/></svg></div>
<div class="chip pri-l" style="left:623px;width:40px;letter-spacing:-0.094px;">Low</div>
<div class="chip st-ip" style="left:733px;width:165px;letter-spacing:0.014px;">In Progress <b class=bu>•</b> Investigating</div>
<div class="chip" style="left:981px;top:7px;padding-left:20.5px;padding-right:5px;width:112.3px;letter-spacing:-0.134px;color:#575d6d;-webkit-text-stroke:0.12px #575d6d"><svg class="av" width="12" height="12" viewBox="0 0 12 12"><defs><clipPath id="c_lg"><circle cx="6" cy="6" r="6"/></clipPath></defs><g clip-path="url(#c_lg)"><rect width="12" height="12" fill="#1c1411"/><path d="M9 1.5l3 2v6l-2 1z" fill="#dbe6ec"/><path d="M5 4.5c1.3-0.6 2.6 0 2.7 1.8l-0.3 4.5H5.6z" fill="#c28e70"/><path d="M1 8.5c1-0.6 2-0.4 2.5 0.3l0.5 3H1z" fill="#2f6a8f"/><circle cx="3.8" cy="8.4" r="0.6" fill="#d8692a"/><path d="M8.5 10c0.8 0 1.4 0.6 1.6 1.6l-1.6 0.4z" fill="#2a6488"/></g></svg>Lila Greenwood</div>
<div class="dt" style="left:1141px">yesterday</div>
<div class="dt" style="left:1260px">20 minutes ago</div>
</div>
<div class="row" style="top:512px">
<div class="chip id" style="left:6px"><span class="dd">..</span><span class="ih">-e1f2</span><svg class="cp" width="9" height="9" viewBox="0 0 9 9"><path d="M3.4 0.5h4.6v5.6H3.4z" fill="none" stroke="#9298a6" stroke-width="1"/><path d="M3.4 2.4H0.9v5.9h4.5V6.1" fill="none" stroke="#9298a6" stroke-width="1"/></svg></div>
<div class="beh"><div class="chip" style="position:relative;display:inline-block;margin-right:4px;vertical-align:top;width:81px;letter-spacing:0.240px;">Structuring</div></div>
<div class="chip" style="left:421px;padding-left:23px;padding-right:22px;width:171.7px;letter-spacing:-0.027px;"><svg class="bld" width="11" height="11" viewBox="0 0 11 11"><path d="M0.6 3.5h3.5v6.4H0.6z M4.9 0.7h4.7v9.2H4.9z M6.3 2.6h1.9 M6.3 4.6h1.9 M6.3 6.6h1.9" fill="none" stroke="#9ea3b0" stroke-width="0.95"/><circle cx="2.35" cy="5.6" r="0.55" fill="#9ea3b0"/><circle cx="2.35" cy="7.3" r="0.55" fill="#9ea3b0"/></svg>EchoStream Networks<svg class="arr" style="right:9px" width="8" height="8" viewBox="0 0 8 8"><path d="M1 7L7 1M2.3 1H7v4.7" fill="none" stroke="#8a909d" stroke-width="1"/></svg></div>
<div class="chip pri-h" style="left:623px;width:43px;letter-spacing:-0.023px;">High</div>
<div class="chip st-ip" style="left:733px;width:165px;letter-spacing:0.014px;">In Progress <b class=bu>•</b> Investigating</div>
<div class="chip" style="left:981px;top:7px;padding-left:20.5px;padding-right:5px;width:93.5px;letter-spacing:-0.091px;color:#575d6d;-webkit-text-stroke:0.12px #575d6d"><svg class="av" width="12" height="12" viewBox="0 0 12 12"><defs><clipPath id="c_as"><circle cx="6" cy="6" r="6"/></clipPath></defs><g clip-path="url(#c_as)"><rect width="12" height="12" fill="#7b6552"/><path d="M0 0h5v4.5L2.5 9 0 9z" fill="#c9b79a"/><path d="M7.5 1.2c2 0 3.6 1.5 3.6 3.5L9 5.5z" fill="#e8ddc8"/><circle cx="8.6" cy="4" r="0.8" fill="#12322e"/><path d="M4 3c1.6-0.8 3.2 0 3.3 1.8l-0.3 3.4H4.5z" fill="#b27952"/><path d="M4.5 2.5c0.6-0.6 1.6-0.8 2.4-0.3" stroke="#5a2430" stroke-width="0.8" fill="none"/><circle cx="6.6" cy="5.6" r="0.5" fill="#fff"/><path d="M1.5 12c0.5-2.5 2.2-3.5 4.5-3.5L9 8c1.5 0.4 2.3 1.8 2.5 4z" fill="#141a1a"/><path d="M7.5 7.5l3-1.5 1 2v4h-3z" fill="#2c5550"/><circle cx="2" cy="6.5" r="0.7" fill="#12322e"/><circle cx="3.2" cy="8.4" r="0.5" fill="#c89630"/></g></svg>Adam Smith</div>
<div class="dt" style="left:1141px">today</div>
<div class="dt" style="left:1260px">20 minutes ago</div>
</div>
<div class="row" style="top:544px">
<div class="chip id" style="left:6px"><span class="dd">..</span><span class="ih">-i5j6</span><svg class="cp" width="9" height="9" viewBox="0 0 9 9"><path d="M3.4 0.5h4.6v5.6H3.4z" fill="none" stroke="#9298a6" stroke-width="1"/><path d="M3.4 2.4H0.9v5.9h4.5V6.1" fill="none" stroke="#9298a6" stroke-width="1"/></svg></div>
<div class="beh"><div class="chip" style="position:relative;display:inline-block;margin-right:4px;vertical-align:top;width:130px;letter-spacing:0.084px;">High-Risk Transfers</div></div>
<div class="chip" style="left:421px;padding-left:23px;padding-right:22px;width:140.5px;letter-spacing:-0.167px;"><svg class="bld" width="11" height="11" viewBox="0 0 11 11"><path d="M0.6 3.5h3.5v6.4H0.6z M4.9 0.7h4.7v9.2H4.9z M6.3 2.6h1.9 M6.3 4.6h1.9 M6.3 6.6h1.9" fill="none" stroke="#9ea3b0" stroke-width="0.95"/><circle cx="2.35" cy="5.6" r="0.55" fill="#9ea3b0"/><circle cx="2.35" cy="7.3" r="0.55" fill="#9ea3b0"/></svg>CyberWave Labs<svg class="arr" style="right:9px" width="8" height="8" viewBox="0 0 8 8"><path d="M1 7L7 1M2.3 1H7v4.7" fill="none" stroke="#8a909d" stroke-width="1"/></svg></div>
<div class="chip pri-l" style="left:623px;width:40px;letter-spacing:-0.094px;">Low</div>
<div class="chip st-cl" style="left:733px;width:145px;letter-spacing:-0.086px;">Closed <b class=bu>•</b> False Positive</div>
<div class="chip" style="left:981px;top:7px;padding-left:20.5px;padding-right:5px;width:112.3px;letter-spacing:-0.134px;color:#575d6d;-webkit-text-stroke:0.12px #575d6d"><svg class="av" width="12" height="12" viewBox="0 0 12 12"><defs><clipPath id="c_lg"><circle cx="6" cy="6" r="6"/></clipPath></defs><g clip-path="url(#c_lg)"><rect width="12" height="12" fill="#1c1411"/><path d="M9 1.5l3 2v6l-2 1z" fill="#dbe6ec"/><path d="M5 4.5c1.3-0.6 2.6 0 2.7 1.8l-0.3 4.5H5.6z" fill="#c28e70"/><path d="M1 8.5c1-0.6 2-0.4 2.5 0.3l0.5 3H1z" fill="#2f6a8f"/><circle cx="3.8" cy="8.4" r="0.6" fill="#d8692a"/><path d="M8.5 10c0.8 0 1.4 0.6 1.6 1.6l-1.6 0.4z" fill="#2a6488"/></g></svg>Lila Greenwood</div>
<div class="dt" style="left:1141px">6 days ago</div>
<div class="dt" style="left:1260px">5 hours ago</div>
</div>
<div class="row" style="top:576px">
<div class="chip id" style="left:6px"><span class="dd">..</span><span class="ih">-m9n0</span><svg class="cp" width="9" height="9" viewBox="0 0 9 9"><path d="M3.4 0.5h4.6v5.6H3.4z" fill="none" stroke="#9298a6" stroke-width="1"/><path d="M3.4 2.4H0.9v5.9h4.5V6.1" fill="none" stroke="#9298a6" stroke-width="1"/></svg></div>
<div class="beh"><div class="chip" style="position:relative;display:inline-block;margin-right:4px;vertical-align:top;width:84.8px;letter-spacing:0.008px;">Arlina Greth</div></div>
<div class="chip" style="left:421px;padding-left:23px;padding-right:22px;width:151.7px;letter-spacing:-0.089px;"><svg class="bld" width="11" height="11" viewBox="0 0 11 11"><path d="M0.6 3.5h3.5v6.4H0.6z M4.9 0.7h4.7v9.2H4.9z M6.3 2.6h1.9 M6.3 4.6h1.9 M6.3 6.6h1.9" fill="none" stroke="#9ea3b0" stroke-width="0.95"/><circle cx="2.35" cy="5.6" r="0.55" fill="#9ea3b0"/><circle cx="2.35" cy="7.3" r="0.55" fill="#9ea3b0"/></svg>AeroTech Ventures<svg class="arr" style="right:9px" width="8" height="8" viewBox="0 0 8 8"><path d="M1 7L7 1M2.3 1H7v4.7" fill="none" stroke="#8a909d" stroke-width="1"/></svg></div>
<div class="chip pri-l" style="left:623px;width:40px;letter-spacing:-0.094px;">Low</div>
<div class="chip st-ip" style="left:733px;width:165px;letter-spacing:0.014px;">In Progress <b class=bu>•</b> Investigating</div>
<div class="chip" style="left:981px;top:7px;padding-left:20.5px;padding-right:5px;width:103.4px;letter-spacing:0.042px;color:#575d6d;-webkit-text-stroke:0.12px #575d6d"><svg class="av" width="12" height="12" viewBox="0 0 12 12"><defs><clipPath id="c_ml"><circle cx="6" cy="6" r="6"/></clipPath></defs><g clip-path="url(#c_ml)"><rect width="12" height="12" fill="#9ea6f2"/><path d="M3.6 4.2c0-2.6 1.4-3.4 2.6-3.4 1.4 0 2.4 0.9 2.4 2.8v1.5H3.6z" fill="#15142a"/><path d="M4.2 4.5h1.9v6.5H4.6z" fill="#3d6fe6"/><path d="M6.1 3.5c1.2 0 1.9 0.8 1.9 2.2v5.3H6.1z" fill="#c9947c"/><path d="M2.5 12c0.5-1.6 1.6-2.2 3.5-2.2s3 0.6 3.5 2.2z" fill="#0c1030"/></g></svg>Martha Lopez</div>
<div class="dt" style="left:1141px">5 days ago</div>
<div class="dt" style="left:1260px">2 hours ago</div>
</div>
<div class="row" style="top:608px">
<div class="chip id" style="left:6px"><span class="dd">..</span><span class="ih">-q3r4</span><svg class="cp" width="9" height="9" viewBox="0 0 9 9"><path d="M3.4 0.5h4.6v5.6H3.4z" fill="none" stroke="#9298a6" stroke-width="1"/><path d="M3.4 2.4H0.9v5.9h4.5V6.1" fill="none" stroke="#9298a6" stroke-width="1"/></svg></div>
<div class="beh"><div class="chip" style="position:relative;display:inline-block;margin-right:4px;vertical-align:top;width:150px;letter-spacing:0.162px;">Unknown Counterparty</div></div>
<div class="chip" style="left:421px;padding-left:23px;padding-right:22px;width:141.5px;letter-spacing:-0.070px;"><svg class="bld" width="11" height="11" viewBox="0 0 11 11"><path d="M0.6 3.5h3.5v6.4H0.6z M4.9 0.7h4.7v9.2H4.9z M6.3 2.6h1.9 M6.3 4.6h1.9 M6.3 6.6h1.9" fill="none" stroke="#9ea3b0" stroke-width="0.95"/><circle cx="2.35" cy="5.6" r="0.55" fill="#9ea3b0"/><circle cx="2.35" cy="7.3" r="0.55" fill="#9ea3b0"/></svg>SkyNet Solutions<svg class="arr" style="right:9px" width="8" height="8" viewBox="0 0 8 8"><path d="M1 7L7 1M2.3 1H7v4.7" fill="none" stroke="#8a909d" stroke-width="1"/></svg></div>
<div class="chip pri-l" style="left:623px;width:40px;letter-spacing:-0.094px;">Low</div>
<div class="chip st-ip" style="left:733px;width:165px;letter-spacing:0.014px;">In Progress <b class=bu>•</b> Investigating</div>
<div class="chip" style="left:981px;top:7px;padding-left:20.5px;padding-right:5px;width:112.3px;letter-spacing:-0.134px;color:#575d6d;-webkit-text-stroke:0.12px #575d6d"><svg class="av" width="12" height="12" viewBox="0 0 12 12"><defs><clipPath id="c_lg"><circle cx="6" cy="6" r="6"/></clipPath></defs><g clip-path="url(#c_lg)"><rect width="12" height="12" fill="#1c1411"/><path d="M9 1.5l3 2v6l-2 1z" fill="#dbe6ec"/><path d="M5 4.5c1.3-0.6 2.6 0 2.7 1.8l-0.3 4.5H5.6z" fill="#c28e70"/><path d="M1 8.5c1-0.6 2-0.4 2.5 0.3l0.5 3H1z" fill="#2f6a8f"/><circle cx="3.8" cy="8.4" r="0.6" fill="#d8692a"/><path d="M8.5 10c0.8 0 1.4 0.6 1.6 1.6l-1.6 0.4z" fill="#2a6488"/></g></svg>Lila Greenwood</div>
<div class="dt" style="left:1141px">8 days ago</div>
<div class="dt" style="left:1260px">2 hours ago</div>
</div>
<div class="row" style="top:640px">
<div class="chip id" style="left:6px"><span class="dd">..</span><span class="ih">-u7v8</span><svg class="cp" width="9" height="9" viewBox="0 0 9 9"><path d="M3.4 0.5h4.6v5.6H3.4z" fill="none" stroke="#9298a6" stroke-width="1"/><path d="M3.4 2.4H0.9v5.9h4.5V6.1" fill="none" stroke="#9298a6" stroke-width="1"/></svg></div>
<div class="beh"><div class="chip" style="position:relative;display:inline-block;margin-right:4px;vertical-align:top;width:81px;letter-spacing:0.240px;">Structuring</div></div>
<div class="chip" style="left:421px;padding-left:23px;padding-right:22px;width:140.5px;letter-spacing:-0.167px;"><svg class="bld" width="11" height="11" viewBox="0 0 11 11"><path d="M0.6 3.5h3.5v6.4H0.6z M4.9 0.7h4.7v9.2H4.9z M6.3 2.6h1.9 M6.3 4.6h1.9 M6.3 6.6h1.9" fill="none" stroke="#9ea3b0" stroke-width="0.95"/><circle cx="2.35" cy="5.6" r="0.55" fill="#9ea3b0"/><circle cx="2.35" cy="7.3" r="0.55" fill="#9ea3b0"/></svg>CyberWave Labs<svg class="arr" style="right:9px" width="8" height="8" viewBox="0 0 8 8"><path d="M1 7L7 1M2.3 1H7v4.7" fill="none" stroke="#8a909d" stroke-width="1"/></svg></div>
<div class="chip pri-m" style="left:623px;width:63px;letter-spacing:0.146px;">Medium</div>
<div class="chip st-ip" style="left:733px;width:165px;letter-spacing:0.014px;">In Progress <b class=bu>•</b> Investigating</div>
<div class="chip" style="left:981px;top:7px;padding-left:20.5px;padding-right:5px;width:103.4px;letter-spacing:0.042px;color:#575d6d;-webkit-text-stroke:0.12px #575d6d"><svg class="av" width="12" height="12" viewBox="0 0 12 12"><defs><clipPath id="c_ml"><circle cx="6" cy="6" r="6"/></clipPath></defs><g clip-path="url(#c_ml)"><rect width="12" height="12" fill="#9ea6f2"/><path d="M3.6 4.2c0-2.6 1.4-3.4 2.6-3.4 1.4 0 2.4 0.9 2.4 2.8v1.5H3.6z" fill="#15142a"/><path d="M4.2 4.5h1.9v6.5H4.6z" fill="#3d6fe6"/><path d="M6.1 3.5c1.2 0 1.9 0.8 1.9 2.2v5.3H6.1z" fill="#c9947c"/><path d="M2.5 12c0.5-1.6 1.6-2.2 3.5-2.2s3 0.6 3.5 2.2z" fill="#0c1030"/></g></svg>Martha Lopez</div>
<div class="dt" style="left:1141px">4 days ago</div>
<div class="dt" style="left:1260px">2 days ago</div>
</div>
<div class="row" style="top:672px">
<div class="chip id" style="left:6px"><span class="dd">..</span><span class="ih">-y1z2</span><svg class="cp" width="9" height="9" viewBox="0 0 9 9"><path d="M3.4 0.5h4.6v5.6H3.4z" fill="none" stroke="#9298a6" stroke-width="1"/><path d="M3.4 2.4H0.9v5.9h4.5V6.1" fill="none" stroke="#9298a6" stroke-width="1"/></svg></div>
<div class="beh"><div class="chip" style="position:relative;display:inline-block;margin-right:4px;vertical-align:top;width:130px;letter-spacing:0.084px;">High-Risk Transfers</div></div>
<div class="chip" style="left:421px;padding-left:23px;padding-right:22px;width:132.8px;letter-spacing:-0.170px;"><svg class="bld" width="11" height="11" viewBox="0 0 11 11"><path d="M0.6 3.5h3.5v6.4H0.6z M4.9 0.7h4.7v9.2H4.9z M6.3 2.6h1.9 M6.3 4.6h1.9 M6.3 6.6h1.9" fill="none" stroke="#9ea3b0" stroke-width="0.95"/><circle cx="2.35" cy="5.6" r="0.55" fill="#9ea3b0"/><circle cx="2.35" cy="7.3" r="0.55" fill="#9ea3b0"/></svg>PixelPulse Tech<svg class="arr" style="right:9px" width="8" height="8" viewBox="0 0 8 8"><path d="M1 7L7 1M2.3 1H7v4.7" fill="none" stroke="#8a909d" stroke-width="1"/></svg></div>
<div class="chip pri-l" style="left:623px;width:40px;letter-spacing:-0.094px;">Low</div>
<div class="chip st-cl" style="left:733px;width:145px;letter-spacing:-0.086px;">Closed <b class=bu>•</b> False Positive</div>
<div class="chip" style="left:981px;top:7px;padding-left:20.5px;padding-right:5px;width:103.4px;letter-spacing:0.042px;color:#575d6d;-webkit-text-stroke:0.12px #575d6d"><svg class="av" width="12" height="12" viewBox="0 0 12 12"><defs><clipPath id="c_ml"><circle cx="6" cy="6" r="6"/></clipPath></defs><g clip-path="url(#c_ml)"><rect width="12" height="12" fill="#9ea6f2"/><path d="M3.6 4.2c0-2.6 1.4-3.4 2.6-3.4 1.4 0 2.4 0.9 2.4 2.8v1.5H3.6z" fill="#15142a"/><path d="M4.2 4.5h1.9v6.5H4.6z" fill="#3d6fe6"/><path d="M6.1 3.5c1.2 0 1.9 0.8 1.9 2.2v5.3H6.1z" fill="#c9947c"/><path d="M2.5 12c0.5-1.6 1.6-2.2 3.5-2.2s3 0.6 3.5 2.2z" fill="#0c1030"/></g></svg>Martha Lopez</div>
<div class="dt" style="left:1141px">yesterday</div>
<div class="dt" style="left:1260px">yesterday</div>
</div>
<div class="row" style="top:704px">
<div class="chip id" style="left:6px"><span class="dd">..</span><span class="ih">-c5d6</span><svg class="cp" width="9" height="9" viewBox="0 0 9 9"><path d="M3.4 0.5h4.6v5.6H3.4z" fill="none" stroke="#9298a6" stroke-width="1"/><path d="M3.4 2.4H0.9v5.9h4.5V6.1" fill="none" stroke="#9298a6" stroke-width="1"/></svg></div>
<div class="beh"><div class="chip" style="position:relative;display:inline-block;margin-right:4px;vertical-align:top;width:164.8px;letter-spacing:-0.044px;">Rapid Movement of Funds</div></div>
<div class="chip" style="left:421px;padding-left:23px;padding-right:22px;width:140.5px;letter-spacing:-0.167px;"><svg class="bld" width="11" height="11" viewBox="0 0 11 11"><path d="M0.6 3.5h3.5v6.4H0.6z M4.9 0.7h4.7v9.2H4.9z M6.3 2.6h1.9 M6.3 4.6h1.9 M6.3 6.6h1.9" fill="none" stroke="#9ea3b0" stroke-width="0.95"/><circle cx="2.35" cy="5.6" r="0.55" fill="#9ea3b0"/><circle cx="2.35" cy="7.3" r="0.55" fill="#9ea3b0"/></svg>CyberWave Labs<svg class="arr" style="right:9px" width="8" height="8" viewBox="0 0 8 8"><path d="M1 7L7 1M2.3 1H7v4.7" fill="none" stroke="#8a909d" stroke-width="1"/></svg></div>
<div class="chip pri-l" style="left:623px;width:40px;letter-spacing:-0.094px;">Low</div>
<div class="chip st-cl" style="left:733px;width:145px;letter-spacing:-0.086px;">Closed <b class=bu>•</b> False Positive</div>
<div class="chip" style="left:981px;top:7px;padding-left:20.5px;padding-right:5px;width:97px;letter-spacing:-0.137px;color:#575d6d;-webkit-text-stroke:0.12px #575d6d"><svg class="av" width="12" height="12" viewBox="0 0 12 12"><defs><clipPath id="c_jd2"><circle cx="6" cy="6" r="6"/></clipPath></defs><g clip-path="url(#c_jd2)"><rect width="12" height="12" fill="#4a5c59"/><path d="M4.6 4.3c0-1.2 0.6-1.7 1.6-1.7s1.5 0.5 1.5 1.7z" fill="#101416"/><rect x="4.8" y="4" width="2.6" height="3.6" rx="1" fill="#dcb8a0"/><path d="M2 12c0.6-2 2-2.6 4-2.6s3.4 0.6 4 2.6z" fill="#bcd0e2"/></g></svg>Jamie Daniel</div>
<div class="dt" style="left:1141px">10 days ago</div>
<div class="dt" style="left:1260px">2 hours ago</div>
</div>
<div class="row" style="top:736px">
<div class="chip id" style="left:6px"><span class="dd">..</span><span class="ih">-g9h0</span><svg class="cp" width="9" height="9" viewBox="0 0 9 9"><path d="M3.4 0.5h4.6v5.6H3.4z" fill="none" stroke="#9298a6" stroke-width="1"/><path d="M3.4 2.4H0.9v5.9h4.5V6.1" fill="none" stroke="#9298a6" stroke-width="1"/></svg></div>
<div class="beh"><div class="chip" style="position:relative;display:inline-block;margin-right:4px;vertical-align:top;width:150px;letter-spacing:0.162px;">Unknown Counterparty</div></div>
<div class="chip" style="left:421px;padding-left:23px;padding-right:22px;width:132.8px;letter-spacing:-0.170px;"><svg class="bld" width="11" height="11" viewBox="0 0 11 11"><path d="M0.6 3.5h3.5v6.4H0.6z M4.9 0.7h4.7v9.2H4.9z M6.3 2.6h1.9 M6.3 4.6h1.9 M6.3 6.6h1.9" fill="none" stroke="#9ea3b0" stroke-width="0.95"/><circle cx="2.35" cy="5.6" r="0.55" fill="#9ea3b0"/><circle cx="2.35" cy="7.3" r="0.55" fill="#9ea3b0"/></svg>PixelPulse Tech<svg class="arr" style="right:9px" width="8" height="8" viewBox="0 0 8 8"><path d="M1 7L7 1M2.3 1H7v4.7" fill="none" stroke="#8a909d" stroke-width="1"/></svg></div>
<div class="chip pri-l" style="left:623px;width:40px;letter-spacing:-0.094px;">Low</div>
<div class="chip st-cl" style="left:733px;width:145px;letter-spacing:-0.086px;">Closed <b class=bu>•</b> False Positive</div>
<div class="chip" style="left:981px;top:7px;padding-left:20.5px;padding-right:5px;width:103.4px;letter-spacing:0.042px;color:#575d6d;-webkit-text-stroke:0.12px #575d6d"><svg class="av" width="12" height="12" viewBox="0 0 12 12"><defs><clipPath id="c_ml"><circle cx="6" cy="6" r="6"/></clipPath></defs><g clip-path="url(#c_ml)"><rect width="12" height="12" fill="#9ea6f2"/><path d="M3.6 4.2c0-2.6 1.4-3.4 2.6-3.4 1.4 0 2.4 0.9 2.4 2.8v1.5H3.6z" fill="#15142a"/><path d="M4.2 4.5h1.9v6.5H4.6z" fill="#3d6fe6"/><path d="M6.1 3.5c1.2 0 1.9 0.8 1.9 2.2v5.3H6.1z" fill="#c9947c"/><path d="M2.5 12c0.5-1.6 1.6-2.2 3.5-2.2s3 0.6 3.5 2.2z" fill="#0c1030"/></g></svg>Martha Lopez</div>
<div class="dt" style="left:1141px">yesterday</div>
<div class="dt" style="left:1260px">10 minutes ago</div>
</div>
<div class="abs" style="left:705px;top:735px;width:110px;height:1px;background:#fff"></div><div class="abs" style="left:705px;top:767px;width:110px;height:1px;background:#fff"></div>
<div class="abs" style="left:1063px;top:415px;width:160px;height:1px;background:#fff"></div><div class="abs" style="left:1063px;top:416px;width:160px;height:1px;background:#f1f2f4"></div>
<div class="abs" style="left:1063px;top:447px;width:160px;height:1px;background:#fff"></div><div class="abs" style="left:1063px;top:448px;width:160px;height:1px;background:#f1f2f4"></div>
<div class="abs" style="left:1063px;top:479px;width:160px;height:1px;background:#fff"></div><div class="abs" style="left:1063px;top:480px;width:160px;height:1px;background:#f1f2f4"></div>
<div class="abs" style="left:1063px;top:511px;width:160px;height:1px;background:#fff"></div><div class="abs" style="left:1063px;top:512px;width:160px;height:1px;background:#f1f2f4"></div>
<div class="abs" style="left:1063px;top:543px;width:160px;height:1px;background:#fff"></div><div class="abs" style="left:1063px;top:544px;width:160px;height:1px;background:#f1f2f4"></div>
<div class="abs" style="left:1063px;top:575px;width:160px;height:1px;background:#fff"></div><div class="abs" style="left:1063px;top:576px;width:160px;height:1px;background:#f1f2f4"></div>
<div class="abs" style="left:1063px;top:607px;width:160px;height:1px;background:#fff"></div><div class="abs" style="left:1063px;top:608px;width:160px;height:1px;background:#f1f2f4"></div>
<div class="abs" style="left:1063px;top:639px;width:160px;height:1px;background:#fff"></div><div class="abs" style="left:1063px;top:640px;width:160px;height:1px;background:#f1f2f4"></div>
<div class="abs" style="left:1063px;top:671px;width:160px;height:1px;background:#fff"></div><div class="abs" style="left:1063px;top:672px;width:160px;height:1px;background:#f1f2f4"></div>
<div class="abs" style="left:1063px;top:703px;width:160px;height:1px;background:#fff"></div><div class="abs" style="left:1063px;top:704px;width:160px;height:1px;background:#f1f2f4"></div>
<div class="abs" style="left:1063px;top:735px;width:160px;height:1px;background:#fff"></div><div class="abs" style="left:1063px;top:736px;width:160px;height:1px;background:#f1f2f4"></div>
<div class="abs" style="left:1063px;top:767px;width:160px;height:1px;background:#fff"></div><div class="abs" style="left:1063px;top:768px;width:160px;height:1px;background:#f1f2f4"></div>
<div id="frame"></div>
</body></html>
